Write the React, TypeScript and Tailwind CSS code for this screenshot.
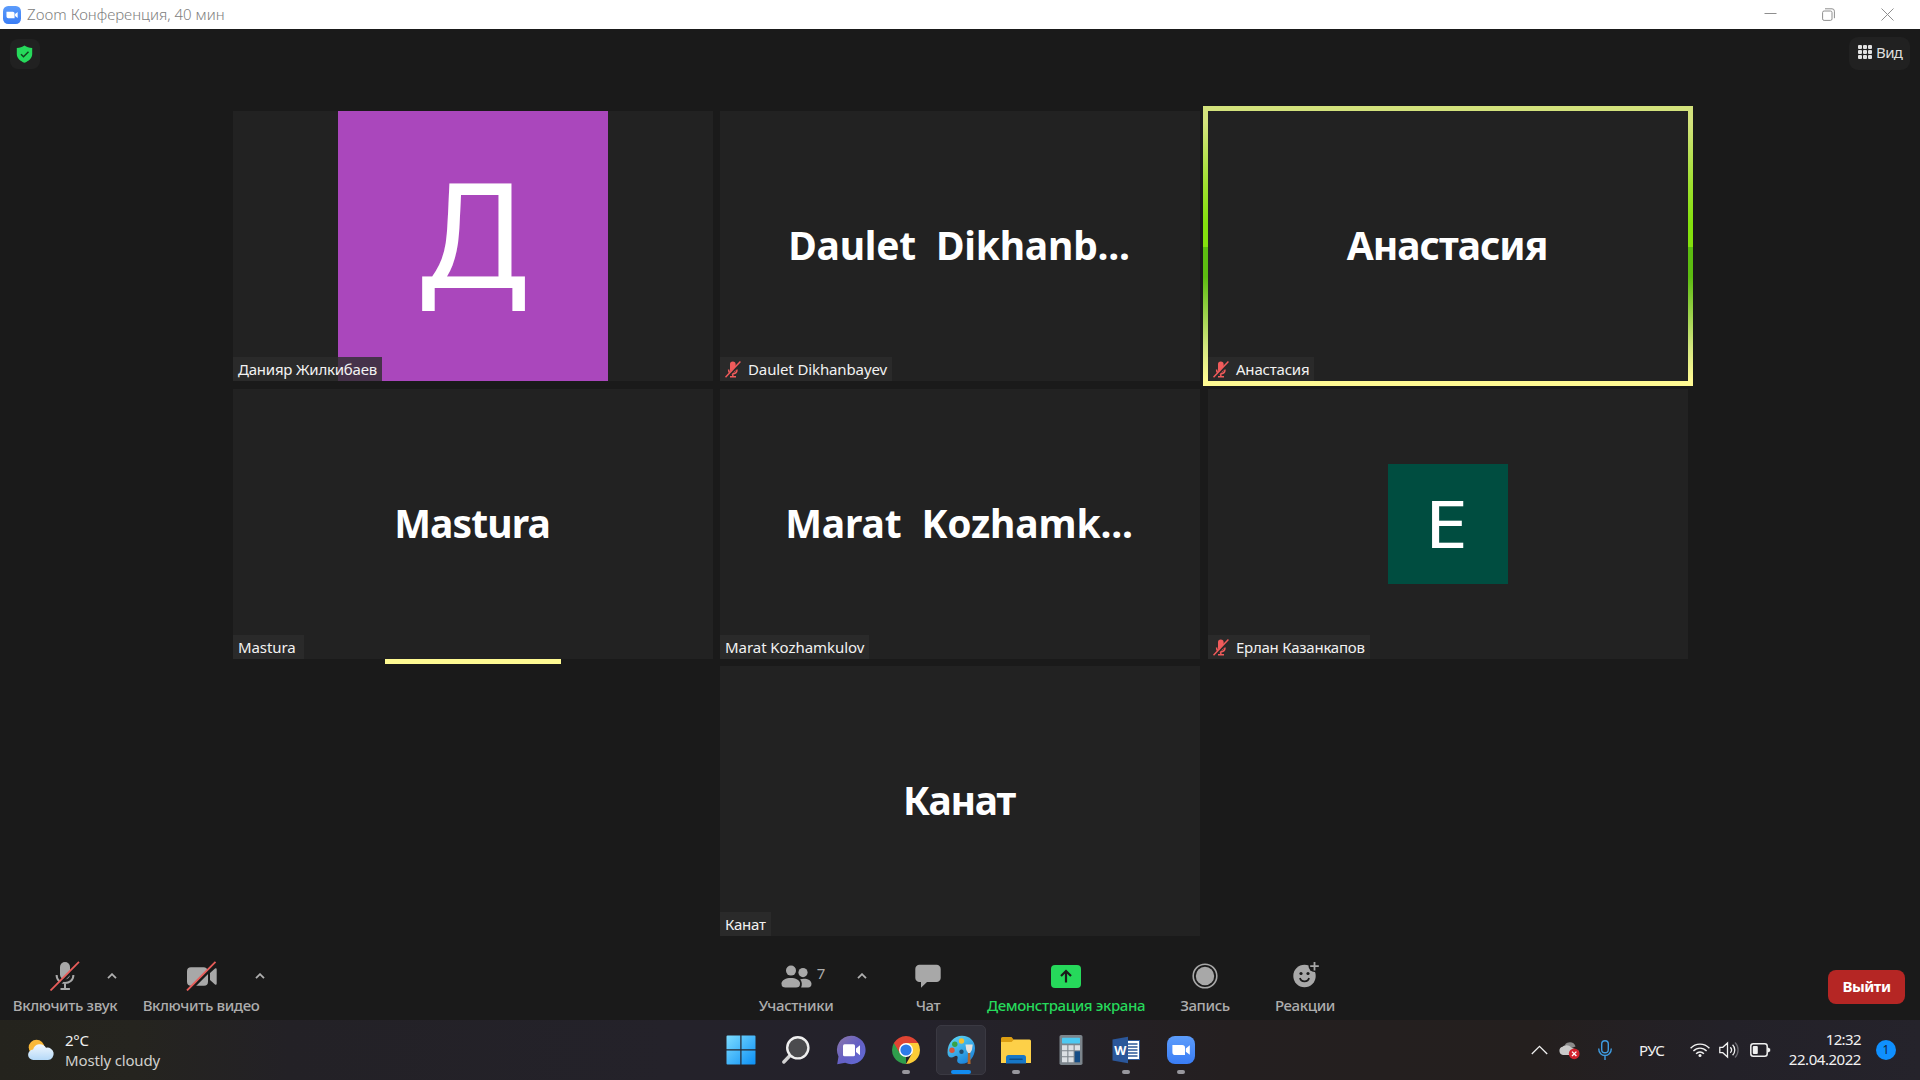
import React from "react";

type Person = {
  name: string;
  labelClass: string;
  big?: string;
  bigClass?: string;
  muted?: boolean;
  avatar?: "purple" | "green";
  active?: boolean;
  pulse?: boolean;
};

function MutedMic() {
  return (
    <svg width="16" height="17" viewBox="0 0 16 17" className="mr-[7px] shrink-0">
      <rect x="5" y="0.5" width="5.6" height="11" rx="2.8" fill="#f15b5b" />
      <path d="M3.600 8.500c0 5.600 8.400 5.600 8.400 0M7.800 12v3.500M5 15.800h6" stroke="#f15b5b" strokeWidth="1.500" fill="none" />
      <path d="M1.300 17L16 1.700" stroke="#292929" strokeWidth="2.400" />
      <path d="M0.500 16.200L15.400 0.600" stroke="#f15b5b" strokeWidth="1.500" />
    </svg>
  );
}

function Tile({ p }: { p: Person }) {
  return (
    <div className="relative flex h-[270px] w-[480px] items-center justify-center bg-[#222222]">
      {p.active && (
        <div className="absolute -inset-[5px] bg-[linear-gradient(180deg,#d3e27c_0%,#d3e27c_6%,#9fe02f_28%,#83e00d_42%,#83e00d_50.4%,#5cbc10_50.4%,#5cbc10_61%,#d3e67e_86%,#fffa93_98%)]">
          <div className="m-[5px] h-[270px] bg-[#222222]" />
        </div>
      )}
      {p.avatar === "purple" && (
        <div className="flex size-[270px] items-center justify-center bg-[#aa47bc] text-white">
          <span className="mb-[30px] ml-[1px] scale-x-[0.985] text-[147px] leading-none">Д</span>
        </div>
      )}
      {p.avatar === "green" && (
        <div className="flex size-[120px] items-center justify-center bg-[#004d40] text-white">
          <span className="mr-[3px] mb-[1px] scale-x-[1.2] text-[65px] leading-none">Е</span>
        </div>
      )}
      {p.big && (
        <div className={"relative mr-[2px] mb-[4px] text-[39px] leading-none font-bold whitespace-pre text-white " + p.bigClass}>
          {p.big}
        </div>
      )}
      <div
        className={
          "absolute bottom-0 left-0 flex h-[24px] items-center bg-[#2d2d2d]/80 pl-[5px] text-[15px] whitespace-nowrap text-[#f2f2f2] " +
          p.labelClass
        }
      >
        {p.muted && <MutedMic />}
        <span className="leading-[22px]">{p.name}</span>
      </div>
      {p.pulse && <div className="absolute -bottom-[5px] left-[152px] h-[5px] w-[176px] bg-[#fffa93]" />}
    </div>
  );
}

const people: Person[] = [
  { name: "Данияр Жилкибаев", labelClass: "w-[149px] tracking-[-0.22px]", avatar: "purple" },
  {
    name: "Daulet Dikhanbayev",
    labelClass: "w-[172px] tracking-[-0.12px]",
    big: "Daulet  Dikhanb...",
    bigClass: "tracking-[-0.2px]",
    muted: true,
  },
  {
    name: "Анастасия",
    labelClass: "w-[106px] tracking-[-0.2px]",
    big: "Анастасия",
    bigClass: "tracking-[-1px]",
    muted: true,
    active: true,
  },
  { name: "Mastura", labelClass: "w-[71px] tracking-[-0.1px]", big: "Mastura", bigClass: "tracking-[-0.9px]", pulse: true },
  { name: "Marat Kozhamkulov", labelClass: "w-[149px] tracking-[-0.05px]", big: "Marat  Kozhamk...", bigClass: "tracking-[-0.15px]" },
  { name: "Ерлан Казанкапов", labelClass: "w-[162px] tracking-[-0.25px]", avatar: "green", muted: true },
  { name: "Канат", labelClass: "w-[51px] tracking-[-0.25px]", big: "Канат", bigClass: "tracking-[-1.2px]" },
];

function ZoomLogo({ size }: { size: number }) {
  return (
    <svg width={size} height={size} viewBox="0 0 28 28" className="shrink-0">
      <defs>
        <linearGradient id="zl" x1="0" y1="0" x2="0" y2="1">
          <stop offset="0" stopColor="#5c9cfb" />
          <stop offset="1" stopColor="#3a7df5" />
        </linearGradient>
      </defs>
      <rect width="28" height="28" rx="8" fill="url(#zl)" />
      <path d="M5.400 9h9.800a2.800 2.800 0 0 1 2.800 2.800V19H8.200a2.800 2.800 0 0 1-2.800-2.800zM18.800 12.400L22.800 9.300v9.400l-4-3z" fill="#fff" />
    </svg>
  );
}

function TitleBar() {
  return (
    <div className="flex h-[29px] shrink-0 items-center bg-white">
      <div className="ml-[3px] flex">
        <ZoomLogo size={18} />
      </div>
      <div className="ml-[6px] text-[15px] font-light text-[#808080]">Zoom Конференция, 40 мин</div>
      <div className="mr-[26px] ml-auto flex items-center text-[#8e8e8e]">
        <svg width="13" height="13" viewBox="0 0 13 13" fill="none" stroke="currentColor">
          <path d="M0.500 5.500h12" />
        </svg>
        <svg width="13" height="13" viewBox="0 0 13 13" fill="none" stroke="currentColor" className="ml-[45px]">
          <rect x="0.600" y="3" width="9.400" height="9.400" rx="1.500" />
          <path d="M3 0.800h7a2.400 2.400 0 0 1 2.400 2.400v7" />
        </svg>
        <svg width="13" height="13" viewBox="0 0 13 13" fill="none" stroke="currentColor" className="ml-[46px]">
          <path d="M0.500 0.500l12 12M12.500 0.500l-12 12" />
        </svg>
      </div>
    </div>
  );
}

function Header() {
  return (
    <div className="flex h-[82px] shrink-0 items-start justify-between pr-[10px] pl-[10px]">
      <div className="mt-[10px] flex size-[30px] items-center justify-center rounded-[8px] bg-[#212121]">
        <svg width="17" height="18" viewBox="0 0 17 18" fill="none" className="mr-px">
          <path d="M8.500 0.500c2.200 1.600 4.600 2.200 7.700 2.400v6c0 4.300-3.700 7.200-7.700 8.800C4.500 16.100.8 13.200.8 8.900v-6C3.900 2.700 6.300 2.100 8.500.5z" fill="#26d95b" />
          <path d="M5 9.300l2.500 2.500 5-5" stroke="#14421f" strokeWidth="1.500" />
        </svg>
      </div>
      <div className="mt-[8px] flex h-[33px] w-[61px] items-center rounded-[9px] bg-[#212121] pb-[4px] pl-[9px]">
        <svg width="14" height="14" viewBox="0 0 14 14" fill="#e2e2e2">
          {[0, 5, 10].map((y) => [0, 5, 10].map((x) => <rect key={`${x}-${y}`} x={x} y={y} width="4" height="4" rx="1" />))}
        </svg>
        <span className="ml-[4px] text-[15px] leading-[18px] tracking-[-0.6px] text-[#dedede]">Вид</span>
      </div>
    </div>
  );
}

function Chevron() {
  return (
    <svg width="10" height="6" viewBox="0 0 10 6" fill="none">
      <path d="M1 5.200l4-4 4 4" stroke="#b0b0b0" strokeWidth="1.800" />
    </svg>
  );
}

function MicOff() {
  return (
    <svg width="30" height="30" viewBox="0 0 30 30" fill="none">
      <rect x="10" y="1" width="10" height="17.500" rx="5" fill="#a8a8a8" />
      <path d="M6.600 14c0 10.800 16.800 10.800 16.800 0M15 22.500v5M10.500 28h9.400" stroke="#a8a8a8" strokeWidth="2" />
      <path d="M2 30.500L31 1.500" stroke="#1a1a1a" strokeWidth="2.600" />
      <path d="M0.500 29.500L29 0.800" stroke="#e85d5a" strokeWidth="1.800" />
    </svg>
  );
}

function CameraOff() {
  return (
    <svg width="31" height="30" viewBox="0 0 31 30" fill="none">
      <path d="M1 10.200a4 4 0 0 1 4-4h12.500a4.500 4.500 0 0 1 4.500 4.500v10a4 4 0 0 1-4 4H5a4 4 0 0 1-4-4zM24 12l5-4.500q1.700-.8 1.700 1v14q0 1.800-1.700 1L24 19z" fill="#a8a8a8" />
      <path d="M2.500 30.500L31 1.800" stroke="#1a1a1a" strokeWidth="3" />
      <path d="M1 29.500L29.500 0.800" stroke="#e85d5a" strokeWidth="1.800" />
    </svg>
  );
}

function Tool({ label, children, className }: { label: string; children: React.ReactNode; className: string }) {
  return (
    <div className={"flex shrink-0 flex-col items-center " + className}>
      <div className="flex h-[36px] items-center justify-center">{children}</div>
      <div className="mt-[1px] text-[15px] leading-[20px] font-medium tracking-[-0.38px] whitespace-nowrap">{label}</div>
    </div>
  );
}

function ZoomToolbar() {
  return (
    <div className="flex h-[84px] shrink-0 pt-[22px] text-[#adadad]">
      <div className="flex w-[751px] shrink-0">
        <Tool label="Включить звук" className="ml-[5px] w-[120px]">
          <MicOff />
        </Tool>
        <div className="ml-[-18px] flex h-[36px] items-center">
          <Chevron />
        </div>
        <Tool label="Включить видео" className="ml-[18px] w-[132px]">
          <CameraOff />
        </Tool>
        <div className="ml-[-12px] flex h-[36px] items-center">
          <Chevron />
        </div>
      </div>
      <Tool label="Участники" className="w-[90px]">
        <div className="flex items-start pl-[14px]">
          <svg width="31" height="23" viewBox="0 0 31 23" fill="#a8a8a8">
            <circle cx="10" cy="5.600" r="5" />
            <path d="M0.500 18.500C0.500 11 19 11 19 18.500c0 3-1.500 4-4 4H4.500c-2.500 0-4-1-4-4z" />
            <circle cx="22" cy="7.600" r="4.600" />
            <path d="M19.200 14.300c5-1.600 11.300.3 11.300 4.500 0 2.600-1.200 3.700-3.400 3.700h-7c1.300-2.600.900-5.600-.9-8.200z" />
          </svg>
          <span className="mt-[-3px] ml-[5px] text-[15px] leading-[22px]">7</span>
        </div>
      </Tool>
      <div className="ml-[16px] flex h-[36px] items-center">
        <Chevron />
      </div>
      <Tool label="Чат" className="ml-[31px] w-[60px]">
        <svg width="26" height="24" viewBox="0 0 26 24" fill="#a8a8a8">
          <path d="M4.500 0.700h17a4.200 4.200 0 0 1 4.200 4.200v9a4.200 4.200 0 0 1-4.200 4.200H12L6 23.800v-5.700H4.500A4.200 4.200 0 0 1 .3 13.900v-9A4.200 4.200 0 0 1 4.500.7z" />
        </svg>
      </Tool>
      <Tool label="Демонстрация экрана" className="ml-[23px] w-[170px] text-[#26d95b]">
        <svg width="30" height="23" viewBox="0 0 30 23" fill="none">
          <rect width="30" height="23" rx="4" fill="#26d95b" />
          <path d="M15 17.500V6.500M10 11l5-5 5 5" stroke="#1a1a1a" strokeWidth="2.200" />
        </svg>
      </Tool>
      <Tool label="Запись" className="ml-[24px] w-[60px]">
        <svg width="26" height="26" viewBox="0 0 26 26" fill="none">
          <circle cx="13" cy="13" r="11.800" stroke="#a8a8a8" strokeWidth="1.600" />
          <circle cx="13" cy="13" r="9.200" fill="#a8a8a8" />
        </svg>
      </Tool>
      <Tool label="Реакции" className="ml-[35px] w-[70px]">
        <svg width="28" height="28" viewBox="0 0 28 28" fill="none" className="mb-[4px] ml-[2px]">
          <circle cx="12.500" cy="16" r="11.200" fill="#a8a8a8" />
          <circle cx="22.500" cy="6" r="6" fill="#1a1a1a" />
          <path d="M22.500 2v8.500M18.200 6.200h8.600" stroke="#a8a8a8" strokeWidth="1.800" />
          <path d="M8 18c1 4.500 8 4.500 9 0" stroke="#1a1a1a" strokeWidth="1.800" />
          <circle cx="9" cy="13.500" r="1.600" fill="#1a1a1a" />
          <circle cx="16" cy="13.500" r="1.600" fill="#1a1a1a" />
        </svg>
      </Tool>
      <div className="mt-[12px] mr-[15px] ml-auto flex h-[34px] w-[77px] items-center justify-center rounded-[8px] bg-[#b52624] pb-[2px] text-[15px] font-bold tracking-[-0.5px] text-white">
        Выйти
      </div>
    </div>
  );
}

function Slot({ children, state }: { children: React.ReactNode; state?: "open" | "active" }) {
  return (
    <div
      className={
        "relative flex size-[50px] items-center justify-center rounded-[5px] " +
        (state === "active" ? "border border-[#3a3942] bg-[#302f38]" : "")
      }
    >
      {children}
      {state === "open" && <div className="absolute bottom-[1px] h-[4px] w-[8px] rounded-full bg-[#98979d]" />}
      {state === "active" && <div className="absolute bottom-0 h-[4px] w-[20px] rounded-full bg-[#128cf0]" />}
    </div>
  );
}

function Taskbar() {
  return (
    <div className="flex h-[60px] shrink-0 items-center bg-[linear-gradient(90deg,#24231d_0%,#25241f_7%,#232126_15%,#24222a_35%,#24222b_48%,#241f20_64%,#241f1e_80%,#232128_90%,#25232b_100%)] text-[15px] text-[#f1f1f1]">
      <svg width="28" height="24" viewBox="0 0 28 24" className="ml-[27px] shrink-0">
        <defs>
          <linearGradient id="cl" x1="0" y1="0" x2="0" y2="1">
            <stop offset="0" stopColor="#f2f8fe" />
            <stop offset="1" stopColor="#b5d9f8" />
          </linearGradient>
        </defs>
        <circle cx="9.500" cy="9.500" r="7.800" fill="#f9b838" />
        <path d="M6.500 22a5.200 5.200 0 0 1-.4-10.400A7 7 0 0 1 19 9.800a6.200 6.200 0 1 1 2 12.200z" fill="url(#cl)" />
      </svg>
      <div className="ml-[10px] w-[641px] leading-[20px]">
        <div className="tracking-[-0.3px]">2°C</div>
        <div className="tracking-[-0.15px] text-[#d0d0cd]">Mostly cloudy</div>
      </div>
      <div className="ml-[10px] flex gap-[5px]">
        <Slot>
          <svg width="30" height="30" viewBox="0 0 30 30">
            <defs>
              <linearGradient id="win" x1="0" y1="0" x2="1" y2="1">
                <stop offset="0" stopColor="#7ddcff" />
                <stop offset="1" stopColor="#0c90f5" />
              </linearGradient>
            </defs>
            <path d="M.5 1.500q0-1 1-1h12.800v13.800H.5zM15.500.5h13q1 0 1 1v12.800h-14zM.5 15.500h13.800v14H1.500q-1 0-1-1zM15.500 15.500h14v13q0 1-1 1h-13z" fill="url(#win)" />
          </svg>
        </Slot>
        <Slot>
          <svg width="30" height="30" viewBox="0 0 30 30" fill="none">
            <path d="M2.800 27L10 19.500" stroke="#d2d2d2" strokeWidth="3.400" strokeLinecap="round" />
            <circle cx="16.800" cy="12.800" r="10.600" fill="#4b4b4e" stroke="#efefef" strokeWidth="2.400" />
          </svg>
        </Slot>
        <Slot>
          <svg width="30" height="30" viewBox="0 0 30 30">
            <defs>
              <linearGradient id="tm" x1="0" y1="0" x2="1" y2="1">
                <stop offset="0" stopColor="#8d78a8" />
                <stop offset="0.500" stopColor="#6560c4" />
                <stop offset="1" stopColor="#5f6bd8" />
              </linearGradient>
            </defs>
            <path d="M15.200 0.800a14.200 14.200 0 1 1-6 27L1.200 29.200 2.500 21.500A14.200 14.200 0 0 1 15.200.8z" fill="url(#tm)" />
            <rect x="7" y="9.200" width="12" height="12" rx="1.500" fill="#fff" />
            <path d="M20 13.500l4-3.300v10L20 17z" fill="#fff" />
          </svg>
        </Slot>
        <Slot state="open">
          <svg width="30" height="30" viewBox="0 0 30 30">
            <path d="M15 15L15 29A14 14 0 0 1 2.880 8z" fill="#2f9e4c" />
            <path d="M15 8H27.120A14 14 0 0 1 15 29L21 18.500z" fill="#fccd37" />
            <path d="M2.880 8A14 14 0 0 1 27.120 8H15L9 18.500z" fill="#df4433" />
            <circle cx="15" cy="15" r="7" fill="#fff" />
            <circle cx="15" cy="15" r="5.600" fill="#2c7be8" />
          </svg>
        </Slot>
        <Slot state="active">
          <svg width="30" height="30" viewBox="0 0 30 30">
            <defs>
              <linearGradient id="pal" x1="0" y1="0" x2="0.600" y2="1">
                <stop offset="0" stopColor="#62dcf5" />
                <stop offset="1" stopColor="#1d86dc" />
              </linearGradient>
            </defs>
            <path d="M16 0.800c8 0 13 5.500 13 12.500 0 8-5.500 15.500-13 15.500-4 0-5.500-2-4.500-5 .8-2.500-1-3.800-3.200-2.300-3 2-6.800 1-6.800-4C1.500 8 8 .8 16 .8z" fill="url(#pal)" />
            <circle cx="15.500" cy="6" r="2.700" fill="#f5c02e" />
            <circle cx="8.800" cy="9.300" r="2.700" fill="#37a345" />
            <circle cx="6" cy="15.300" r="2.700" fill="#d8533a" />
            <circle cx="15.500" cy="16.800" r="2.200" fill="#234c6e" />
            <path d="M22 17h2.200l.4 12h-3z" fill="#b0672c" />
            <path d="M19.500 9.500h7.200l-.8 5.500-1.800 3h-2l-1.800-3z" fill="#e4e1dc" />
          </svg>
        </Slot>
        <Slot state="open">
          <svg width="32" height="30" viewBox="0 0 32 30">
            <path d="M1 3.500q0-1.500 1.500-1.500h9l3 3.500H20v6H1z" fill="#dc9e12" />
            <path d="M1 7h10.500l2.500-2.500h15.500q1.500 0 1.500 1.500v22H1z" fill="#fdd048" />
            <path d="M6 28.500v-6q0-2.500 2.500-2.500h15q2.500 0 2.500 2.500v6z" fill="#1777c7" />
            <path d="M10 24.200h12" stroke="#0b4f8b" strokeWidth="1.600" strokeLinecap="round" />
          </svg>
        </Slot>
        <Slot>
          <svg width="24" height="30" viewBox="0 0 24 30">
            <rect x="0.500" width="23" height="30" rx="1.800" fill="#7c858c" />
            <rect x="3" y="2.800" width="18" height="5.600" rx="0.600" fill="#4cc9f2" />
            <path d="M3 10.300h5.300v5H3zM9.400 10.300h5.200v5H9.400zM15.700 10.300H21v5h-5.300zM3 16.300h5.300v5H3zM9.400 16.300h5.200v5H9.400zM3 22.300h5.300v5H3zM9.400 22.300h5.200v5H9.400z" fill="#dbe0e4" />
            <rect x="15.700" y="16.300" width="5.300" height="11" fill="#154d86" />
          </svg>
        </Slot>
        <Slot state="open">
          <svg width="28" height="28" viewBox="0 0 28 28">
            <rect x="13" y="4.500" width="14.500" height="19" fill="#fff" stroke="#2d5898" />
            <path d="M16 8h9.500M16 11h9.500M16 14h9.500M16 17h9.500M16 20h9.500" stroke="#2d5898" strokeWidth="1.400" />
            <path d="M0.500 3.400L16 0.700v26.600L0.500 24.600z" fill="#2b579a" />
            <text x="8.200" y="18.700" textAnchor="middle" fontSize="12.500" fontWeight="700" fill="#fff">
              W
            </text>
          </svg>
        </Slot>
        <Slot state="open">
          <ZoomLogo size={28} />
        </Slot>
      </div>
      <div className="mr-[24px] ml-auto flex items-center">
        <svg width="17" height="10" viewBox="0 0 17 10" fill="none">
          <path d="M0.800 9l7.700-7.700L16.200 9" stroke="#f0f0f0" strokeWidth="1.300" />
        </svg>
        <svg width="21" height="20" viewBox="0 0 21 20" className="ml-[11px]">
          <path d="M6 4.500C9 .8 15.500 1.500 16.500 6.500L10 9z" fill="#8b8b8b" />
          <path d="M4 15A4.200 4.200 0 0 1 3.500 6.800C6.500 4.500 10 5 12.200 7.500L20 11v4z" fill="#c9c9c9" />
          <circle cx="15.200" cy="13.800" r="5.400" fill="#d2222d" />
          <path d="M13 11.600l4.400 4.400M17.400 11.600L13 16" stroke="#fff" strokeWidth="1.300" />
        </svg>
        <svg width="14" height="20" viewBox="0 0 14 20" fill="none" stroke="#3f9be0" strokeWidth="1.400" className="ml-[18px]">
          <rect x="3.700" y="0.700" width="6.600" height="12" rx="3.300" />
          <path d="M0.700 8.500c0 9.300 12.600 9.300 12.600 0M7 15.500V20" />
        </svg>
        <span className="ml-[27px] w-[27px] tracking-[-0.6px]">РУС</span>
        <svg width="20" height="16" viewBox="0 0 20 16" fill="none" stroke="#f0f0f0" strokeWidth="1.400" className="ml-[24px]">
          <path d="M0.600 6.300c5.200-5.600 13.600-5.600 18.800 0M3.400 9.100c3.700-4 9.500-4 13.200 0M6.100 11.800c2.200-2.400 5.600-2.400 7.800 0" />
          <circle cx="10" cy="13.500" r="1.500" fill="#f0f0f0" stroke="none" />
        </svg>
        <svg width="21" height="18" viewBox="0 0 21 18" fill="none" stroke="#f0f0f0" strokeWidth="1.300" className="ml-[9px]">
          <path d="M0.800 6.300h3L8.500 2v14l-4.700-4.300h-3zM11.300 6.200c1.500 1.600 1.500 4 0 5.600M13.600 3.800c2.900 2.900 2.900 7.500 0 10.400" />
          <path d="M16 1.500c4.100 4 4.100 11 0 15" stroke="#6b6a70" />
        </svg>
        <svg width="21" height="14" viewBox="0 0 21 14" fill="none" className="ml-[10px]">
          <rect x="0.800" y="0.800" width="16.400" height="12.400" rx="2.500" stroke="#f0f0f0" strokeWidth="1.500" />
          <rect x="2.800" y="3" width="5" height="8" rx="1" fill="#f0f0f0" />
          <path d="M18 4.500l2.200 1.200v2.600L18 9.500z" fill="#f0f0f0" />
        </svg>
        <div className="ml-[10px] w-[80px] pb-[2px] text-right leading-[20px]">
          <div className="tracking-[-0.6px]">12:32</div>
          <div className="tracking-[-0.45px]">22.04.2022</div>
        </div>
        <div className="ml-[15px] flex size-[20px] items-center justify-center rounded-full bg-[#0f90ff] text-[12px] text-[#10233a]">1</div>
      </div>
    </div>
  );
}

export default function App() {
  return (
    <div className="flex h-[1080px] w-[1920px] flex-col overflow-hidden bg-[#1a1a1a] font-['Noto_Sans',sans-serif]">
      <TitleBar />
      <Header />
      <div className="ml-[233px] grid h-[825px] shrink-0 grid-cols-[487px_488px_480px] grid-rows-[278px_277px_270px]">
        {people.slice(0, 6).map((p) => (
          <Tile key={p.name} p={p} />
        ))}
        <div className="col-start-2">
          <Tile p={people[6]} />
        </div>
      </div>
      <ZoomToolbar />
      <Taskbar />
    </div>
  );
}
